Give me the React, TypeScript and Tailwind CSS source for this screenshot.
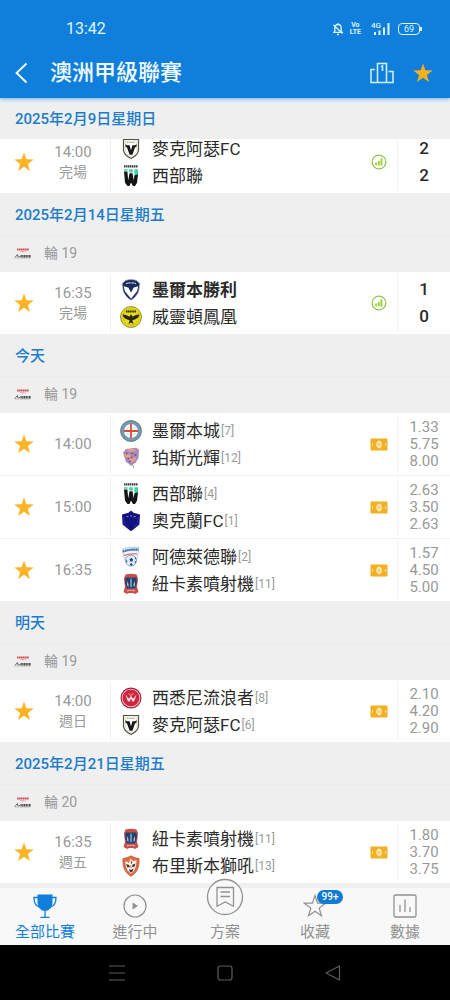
import type { ReactNode } from "react";

type TeamId =
  | "macarthur"
  | "western"
  | "victory"
  | "phoenix"
  | "city"
  | "perth"
  | "auckland"
  | "adelaide"
  | "newcastle"
  | "wanderers"
  | "brisbane";

interface Team {
  id: TeamId;
  name: string;
  rank?: number;
  bold?: boolean;
}

interface Match {
  time: string;
  note?: string;
  teams: [Team, Team];
  score?: [number, number];
  odds?: [string, string, string];
}

interface Section {
  date: string;
  round?: string;
  matches: Match[];
}

const sections: Section[] = [
  {
    date: "2025年2月9日星期日",
    matches: [
      {
        time: "14:00",
        note: "完場",
        teams: [
          { id: "macarthur", name: "麥克阿瑟FC" },
          { id: "western", name: "西部聯" },
        ],
        score: [2, 2],
      },
    ],
  },
  {
    date: "2025年2月14日星期五",
    round: "輪 19",
    matches: [
      {
        time: "16:35",
        note: "完場",
        teams: [
          { id: "victory", name: "墨爾本勝利", bold: true },
          { id: "phoenix", name: "威靈頓鳳凰" },
        ],
        score: [1, 0],
      },
    ],
  },
  {
    date: "今天",
    round: "輪 19",
    matches: [
      {
        time: "14:00",
        teams: [
          { id: "city", name: "墨爾本城", rank: 7 },
          { id: "perth", name: "珀斯光輝", rank: 12 },
        ],
        odds: ["1.33", "5.75", "8.00"],
      },
      {
        time: "15:00",
        teams: [
          { id: "western", name: "西部聯", rank: 4 },
          { id: "auckland", name: "奧克蘭FC", rank: 1 },
        ],
        odds: ["2.63", "3.50", "2.63"],
      },
      {
        time: "16:35",
        teams: [
          { id: "adelaide", name: "阿德萊德聯", rank: 2 },
          { id: "newcastle", name: "紐卡素噴射機", rank: 11 },
        ],
        odds: ["1.57", "4.50", "5.00"],
      },
    ],
  },
  {
    date: "明天",
    round: "輪 19",
    matches: [
      {
        time: "14:00",
        note: "週日",
        teams: [
          { id: "wanderers", name: "西悉尼流浪者", rank: 8 },
          { id: "macarthur", name: "麥克阿瑟FC", rank: 6 },
        ],
        odds: ["2.10", "4.20", "2.90"],
      },
    ],
  },
  {
    date: "2025年2月21日星期五",
    round: "輪 20",
    matches: [
      {
        time: "16:35",
        note: "週五",
        teams: [
          { id: "newcastle", name: "紐卡素噴射機", rank: 11 },
          { id: "brisbane", name: "布里斯本獅吼", rank: 13 },
        ],
        odds: ["1.80", "3.70", "3.75"],
      },
    ],
  },
];

const crests: Record<TeamId, ReactNode> = {
  macarthur: (
    <>
      <path d="M3.500 1.500h15v10.500c0 4-3.500 6.500-7.500 8.500C7 18.500 3.500 16 3.500 12z" fill="#fff" stroke="#55533f" strokeWidth="1.200" />
      <path d="M5.200 3.200h11.600v8.600c0 3-2.600 5-5.800 6.700-3.200-1.700-5.800-3.700-5.800-6.700z" fill="none" stroke="#cfc7a8" strokeWidth=".6" />
      <path d="M7 4.500h8" stroke="#8b8874" strokeWidth=".8" strokeDasharray="1 .5" />
      <path d="M5.200 6.200l1.800 1h2.600L11 12.500l1.400-5.300H15l1.800-1-.4 2.600-1.400.7-2.600 7.300H9.600L7 9.500l-1.400-.7z" fill="#16181a" />
    </>
  ),
  western: (
    <>
      <path d="M4 1.300h14" stroke="#3a3a3a" strokeWidth="2.200" strokeDasharray="1.500 .5" />
      <path d="M4 4.200h3.600v1.500H4zM9.200 4.200h3.600v3.300H9.200zM14.400 4.200H18v7.500h-3.600z" fill="#3fd0a6" />
      <path d="M4 6.500h3.400l.8 9 1.300-7.300h3l1.300 7.300.6-5 3.600-1.200-1 8.500-2 3.200h-2L11 17.500 9.500 21h-2L5 17.800z" fill="#121516" />
    </>
  ),
  victory: (
    <>
      <path d="M5.500 1.500C9 .2 13 .2 16.500 1.500l3.300 3-1 7.500c-1.500 4-4.300 7-7.800 9.200C7.500 19 4.700 16 3.200 12l-1-7.500z" fill="#1b2b5e" stroke="#a5acc4" strokeWidth=".7" />
      <path d="M3.800 7.300l5 1.500L11 13.500l2.200-4.700 5-1.500-1 4.800L11 19.700 4.800 12.100z" fill="#fff" />
      <path d="M8.500 8.700h5L11 13z" fill="#1b2b5e" />
      <path d="M6 4.700c3-1.200 7-1.200 10 0" fill="none" stroke="#cfd6ec" strokeWidth="1.300" strokeDasharray="1.100 .4" />
    </>
  ),
  phoenix: (
    <>
      <circle cx="11" cy="11" r="10.500" fill="#e9dc1c" stroke="#6e6a1a" strokeWidth=".7" />
      <circle cx="11" cy="11" r="8.200" fill="none" stroke="#a69d18" strokeWidth=".5" />
      <path d="M6 5.500h10" stroke="#2d2b18" strokeWidth="1.800" strokeDasharray="1.400 .4" />
      <path d="M2.500 8.500c3 .2 5.500 1 7 2.300L11 8l1.500 2.800c1.500-1.300 4-2.100 7-2.300-.8 2.800-2.700 4.700-5.500 5.300l-1.700.5L13.500 18 11 16.500 8.500 18l1.200-3.700-1.700-.5c-2.800-.6-4.700-2.500-5.500-5.300z" fill="#292614" />
    </>
  ),
  city: (
    <>
      <circle cx="11" cy="11" r="10.500" fill="#6e93a9" stroke="#4c6b80" strokeWidth=".7" />
      <circle cx="11" cy="11" r="8.600" fill="none" stroke="#8fb0c2" strokeWidth=".8" strokeDasharray="1.200 1" />
      <circle cx="11" cy="11" r="7" fill="#fff" />
      <path d="M11 4v14M4 11h14" stroke="#dd4b38" strokeWidth="1.800" />
      <path d="M6.500 7H9v2H6.500zM13 7h2.500v2H13zM6.500 13H9v2H6.500zM13 13h2.500v2H13z" fill="#dcebf2" />
    </>
  ),
  perth: (
    <>
      <path d="M3 5.500L6 2l10-1.200 3 1.700-.5 8.500-3 5-4.500 2-5-3z" fill="#a98abb" />
      <path d="M6 3.500l5-1.700 6 1.200-5 2zM4 7.500l4-1 3 3-4 2zM9 12l4-2 3.500 1.500-4.500 4z" fill="#e8a07f" />
      <path d="M6 6.500h1.500M11.500 6.500h1.800M7.500 11.500H9M14.500 8h1.800M11 10.500h1.500M9 14.500h1.500" stroke="#634b94" strokeWidth="1.600" />
      <path d="M12 17l2 4M9.500 17l2 2" stroke="#8c7190" strokeWidth=".8" />
    </>
  ),
  auckland: (
    <>
      <path d="M11 .5l2.500 2.300 6.500 1.700-.6 10-4.500 3.700L11 21.300l-3.900-3.100-4.500-3.700L2 4.500l6.500-1.700z" fill="#11117f" />
      <path d="M3.500 7l1.500 7 4 3M18.500 7L17 14l-4 3" fill="none" stroke="#2830a8" strokeWidth=".8" />
      <path d="M6.500 6.500h2M10 6h2M13.500 6.500h2" stroke="#9ba0cd" strokeWidth=".8" />
      <path d="M9 15l2 1 2-1-2 3z" fill="#080d50" />
    </>
  ),
  adelaide: (
    <>
      <path d="M2 3.500c5-2.500 11-2.800 17-2l-1.500 9c-.5 4.500-3 8-6.500 10C7 18.500 4.200 15 3.800 10z" fill="#eef3f8" stroke="#9cabc0" strokeWidth=".6" />
      <path d="M3 5.500c5-1.800 10-2.200 15.500-1.800" fill="none" stroke="#2c70b2" strokeWidth="2.200" strokeDasharray="1.700 .4" />
      <path d="M4 9.500c4-1.600 8-2 13-1.500" fill="none" stroke="#d95d5e" strokeWidth="1.100" />
      <circle cx="11" cy="14.500" r="5.500" fill="#e5edf6" stroke="#6385aa" strokeWidth=".7" />
      <path d="M9.500 13l2-1 1.600 1.500-.7 2h-2.200zM6 14l1.500 1-1 2zM14.500 11l1.500 1-.5 1.700zM9.500 18l1.800-.7 1.700 1-1.700 1.400zM14.500 15.500l1.700-.5-1 2.500z" fill="#17477f" />
    </>
  ),
  newcastle: (
    <>
      <path d="M5.500 1.500c3.500-1 7.500-1 11 0l1.500 4-1 8.500 1.500 5-3.500 2-2-1h-4l-2 1-3.500-2L5 14 4 5.500z" fill="#c84e4b" />
      <path d="M5.500 4.500h11l.5 5-2 6H7L5 9.500z" fill="#21446f" />
      <path d="M11 4.500l1 2.500v7h-2V7zM7 8l1.500 3v3L7 12.500zM15 8l-1.500 3v3l1.500-1.500z" fill="#a6bfd5" />
      <path d="M11 5v10" stroke="#294a73" strokeWidth=".8" />
      <path d="M7 18c2-1 6-1 8 0" fill="none" stroke="#f2c6bd" strokeWidth="1.200" strokeDasharray="1 .5" />
    </>
  ),
  wanderers: (
    <>
      <circle cx="11" cy="11" r="10.500" fill="#a01f38" />
      <circle cx="11" cy="11" r="9.300" fill="#f7dfe2" />
      <circle cx="11" cy="11" r="8.500" fill="#d3243e" />
      <path d="M5.500 7.500l2 6 1.800 1.500L11 11.500l1.700 3.500 1.800-1.500 2-6-3 4-1-.3L11 8.700l-1.500 2.500-1 .3z" fill="#fbeaec" />
      <path d="M8.500 6.500L11 8.500l2.500-2" stroke="#f7b9bf" strokeWidth=".9" fill="none" />
    </>
  ),
  brisbane: (
    <>
      <path d="M3 3.500C7 3 9 2 11 .8c2 1.200 4 2.200 8 2.700.5 8-1.500 14-8 17.700C4.500 17.500 2.500 11.500 3 3.500z" fill="#df6c43" stroke="#b45b3f" strokeWidth=".8" />
      <path d="M5.500 6l3.500 2 1.500-4.500L13 6l3.500-.5-.5 5.500-2 5-3 2.500-3.500-3L5.500 10z" fill="#f7eee5" />
      <path d="M6 9l3 1 1 2-2.500.5zM12 10l3.500-1.500-1 3-2 .8zM9 14l2 1 2.500-1.500-1 3-1.500 1-1.500-1.200zM11 5l1.200 3L11 9z" fill="#35333a" />
      <path d="M10.300 9.500l1.700 3.500-2-.5z" fill="#f0834d" />
    </>
  ),
};

function Crest({ id }: { id: TeamId }) {
  return (
    <svg viewBox="0 0 22 22" className="size-[22px] shrink-0" aria-hidden="true">
      {crests[id]}
    </svg>
  );
}

const STAR = "M12 1.500l2.600 7.600 8 .1-6.400 4.900 2.300 7.700L12 17.200l-6.500 4.600 2.300-7.700-6.400-4.900 8-.1z";

function Star({ className }: { className: string }) {
  return (
    <svg viewBox="0 0 24 24" className={className} aria-hidden="true">
      <path d={STAR} fill="currentColor" />
    </svg>
  );
}

function LeagueMark() {
  return (
    <svg viewBox="0 0 18 12" className="h-3 w-[18px]" aria-hidden="true">
      <path d="M3 2.500h12" stroke="#d5525b" strokeWidth="2" strokeDasharray="1.700 .3" />
      <path d="M6.500 4.700h5" stroke="#d98b90" strokeWidth="1" strokeDasharray="1 .4" />
      <path d="M1 10.500l2.500-3 .8 3M5 9.500h1" fill="none" stroke="#555" strokeWidth=".9" />
      <path d="M6.500 9.200h10.500" stroke="#505050" strokeWidth="2.400" strokeDasharray="1.300 .4" />
      <path d="M.5 11h16" stroke="#888" strokeWidth=".5" />
    </svg>
  );
}

function StatsIcon() {
  return (
    <svg viewBox="0 0 16 16" className="size-4" aria-hidden="true">
      <circle cx="8" cy="8" r="6.900" fill="none" stroke="#92c34c" strokeWidth="1.200" />
      <path d="M4.200 8.500h1.700v3H4.200zM6.800 7h1.900v4.500H6.800zM9.500 4.500h1.900v7H9.500z" fill="#98d12f" />
    </svg>
  );
}

function OddsIcon() {
  return (
    <svg viewBox="0 0 18 13" className="h-[13px] w-[18px]" aria-hidden="true">
      <rect x=".5" y=".5" width="17" height="12" rx="1" fill="#f2b022" />
      <ellipse cx="9" cy="6.500" rx="2.200" ry="2.800" fill="none" stroke="#fff4d2" strokeWidth="1.200" />
      <path d="M9 2.500v8M2.500 5.500v2M15.500 5.500v2" stroke="#fff4d2" strokeWidth="1.100" />
    </svg>
  );
}

function StatusBar() {
  return (
    <div className="flex h-12 items-center justify-between pt-2.5 pr-7 pl-[66px] text-[#def5ff]">
      <span className="text-[16px] leading-5">13:42</span>
      <div className="flex items-center">
        <svg viewBox="0 0 12 14" className="mr-1.5 h-3.5 w-3" fill="none" stroke="currentColor" strokeWidth="1.300" aria-hidden="true">
          <path d="M2.800 10V6.200C2.800 4 4 2.500 6 2.500s3.200 1.500 3.200 3.700V10M1 10.300h10M6 1v1.500M5 12.500h2M1.500 3l9 8.500" />
        </svg>
        <span className="mr-2.5 text-center text-[7px] leading-[7px] font-bold">
          Vo
          <br />
          LTE
        </span>
        <span className="-mr-[7px] self-start text-[8px] leading-[8px] font-medium">4G</span>
        <svg viewBox="0 0 16 14" className="mr-2 h-3.5 w-4" fill="currentColor" aria-hidden="true">
          <path d="M0 10h2v3H0zM4.500 8.500h2V13h-2zM9 5.500h2V13H9zM13.500 1h2v12h-2z" />
        </svg>
        <span className="flex h-3 w-[22px] items-center justify-center rounded-[4px] border border-current text-[9px] leading-[9px]">69</span>
        <span className="h-1 w-0.5 bg-current" />
      </div>
    </div>
  );
}

function Header() {
  return (
    <header className="sticky top-0 z-20 bg-[#107fdc] shadow-[0_1px_4px_#5eb0f0]">
      <StatusBar />
      <div className="flex h-[50px] items-center pr-4 pl-3">
        <button aria-label="返回" className="flex size-5 items-center justify-center text-white">
          <svg viewBox="0 0 20 24" className="h-6 w-5" fill="none" stroke="currentColor" strokeWidth="1.800" aria-hidden="true">
            <path d="M14.500 2.500L4.500 12l10 9.500" />
          </svg>
        </button>
        <h1 className="ml-[18px] flex-1 text-[22px] leading-8 font-medium text-[#f0fbff]">澳洲甲級聯賽</h1>
        <button aria-label="排名" className="mr-[18px] text-[#d6f1ff]">
          <svg viewBox="0 0 24 22" className="h-[22px] w-6" fill="none" stroke="currentColor" strokeWidth="1.500" aria-hidden="true">
            <path d="M7.500 20.500v-19h9v19M4.800 7.500H1v13h22v-11h-4.500M11 5l1.500-1v5" />
          </svg>
        </button>
        <button aria-label="收藏聯賽" className="text-[#fcb01c]">
          <Star className="size-[22px]" />
        </button>
      </div>
    </header>
  );
}

function TeamLine({ team }: { team: Team }) {
  return (
    <div className="flex h-[27px] items-center">
      <Crest id={team.id} />
      <span className={team.bold ? "ml-2.5 text-[17px] leading-6 font-bold text-[#2b2b2b]" : "ml-2.5 text-[17px] leading-6 text-[#2b2b2b]"}>
        {team.name}
      </span>
      {team.rank !== undefined && <span className="ml-px text-[12px] leading-4 text-[#9a9a9a]">[{team.rank}]</span>}
    </div>
  );
}

function MatchRow({ match }: { match: Match }) {
  return (
    <li className="flex h-[63px] items-stretch border-b border-[#f0f0f0] bg-white">
      <div className="flex w-[110px] items-center">
        <button aria-label="收藏比賽" className="flex w-12 justify-center text-[#fcb324]">
          <Star className="size-[22px]" />
        </button>
        <div className="w-[50px] text-center text-[#999]">
          <div className="text-[15px] leading-5">{match.time}</div>
          {match.note && <div className="text-[14px] leading-5">{match.note}</div>}
        </div>
      </div>
      <div className="my-0.5 w-px bg-[#efefef]" />
      <div className="flex min-w-0 flex-1 flex-col justify-center pl-[9px]">
        <TeamLine team={match.teams[0]} />
        <TeamLine team={match.teams[1]} />
      </div>
      <div className="flex w-9 items-center justify-center">{match.score ? <StatsIcon /> : <OddsIcon />}</div>
      <div className="my-0.5 w-px bg-[#f3f3f3]" />
      <div className="flex w-[52px] flex-col items-center justify-center">
        {match.score?.map((goals, i) => (
          <span key={i} className="text-[17px] leading-[27px] font-medium text-[#2a2a2a]">
            {goals}
          </span>
        ))}
        {match.odds?.map((odd, i) => (
          <span key={i} className="text-[15px] leading-[17px] text-[#999]">
            {odd}
          </span>
        ))}
      </div>
    </li>
  );
}

function MatchSection({ section }: { section: Section }) {
  return (
    <section>
      <h2 className="relative z-10 flex h-[41px] items-center bg-[#efefef] px-[15px] text-[15px] leading-6 font-medium text-[#1c7cc9]">
        {section.date}
      </h2>
      {section.round && (
        <div className="flex h-[37px] items-center gap-3 border-t border-[#ebebeb] bg-[#efefef] px-3.5 pb-0.5 text-[14px] leading-6 text-[#9a9a9a]">
          <LeagueMark />
          <span>{section.round}</span>
        </div>
      )}
      <ul className={section.round ? "" : "-mt-2"}>
        {section.matches.map((match) => (
          <MatchRow key={match.time} match={match} />
        ))}
      </ul>
    </section>
  );
}

const tabs: { label: string; icon: ReactNode; active?: boolean; raised?: boolean; badge?: string }[] = [
  {
    label: "全部比賽",
    active: true,
    icon: (
      <svg viewBox="0 0 24 24" className="size-6" aria-hidden="true">
        <path d="M4.500 .5h15v8c0 4-2.500 7-5.500 8.300h-4C7 15.500 4.500 12.500 4.500 8.500z" fill="currentColor" />
        <path d="M5 3.500H1c0 4.500.5 8 5 9.500M19 3.500h4c0 4.500-.5 8-5 9.500M12 16v7M7.500 23.300h9" fill="none" stroke="currentColor" strokeWidth="1.300" />
      </svg>
    ),
  },
  {
    label: "進行中",
    icon: (
      <svg viewBox="0 0 24 24" className="size-6" aria-hidden="true">
        <circle cx="12" cy="12" r="11" fill="none" stroke="currentColor" strokeWidth="1.200" />
        <path d="M9.500 8.500l5.500 3.500-5.500 3.500z" fill="currentColor" />
      </svg>
    ),
  },
  {
    label: "方案",
    raised: true,
    icon: (
      <svg viewBox="0 0 38 38" className="size-[38px]" fill="none" stroke="currentColor" strokeWidth="1.300" aria-hidden="true">
        <circle cx="19" cy="19" r="17.500" fill="#f8f8f8" />
        <path d="M11 9.500h16.500v18.800L19.300 24 11 28.300zM14.500 14h9.500M14.500 18.500h9.500" />
      </svg>
    ),
  },
  {
    label: "收藏",
    badge: "99+",
    icon: (
      <svg viewBox="0 0 24 24" className="size-6" aria-hidden="true">
        <path d={STAR} fill="none" stroke="currentColor" strokeWidth="1.200" />
      </svg>
    ),
  },
  {
    label: "數據",
    icon: (
      <svg viewBox="0 0 24 24" className="size-6" fill="none" stroke="currentColor" strokeWidth="1.300" aria-hidden="true">
        <rect x="1" y="1" width="22" height="22" rx="1.500" />
        <path d="M7 11v7M12 5.500V18M17 13v5" />
      </svg>
    ),
  },
];

function TabBar() {
  return (
    <nav className="grid h-[61px] grid-cols-5 border-t-4 border-[#f0f0f0] bg-[#f8f8f8]">
      {tabs.map((tab) => (
        <button
          key={tab.label}
          className={tab.active ? "flex h-[57px] flex-col items-center justify-end pb-[3px] text-[#107fdc]" : "flex h-[57px] flex-col items-center justify-end pb-[3px] text-[#919191]"}
        >
          <span className={tab.raised ? "relative mb-1.5 block" : "relative mb-1 block"}>
            {tab.icon}
            {tab.badge && (
              <span className="absolute -top-1 left-3.5 flex h-3.5 w-[26px] items-center justify-center rounded-full bg-[#107bd2] text-[10px] leading-[14px] font-medium text-white">
                {tab.badge}
              </span>
            )}
          </span>
          <span className="text-[15px] leading-5">{tab.label}</span>
        </button>
      ))}
    </nav>
  );
}

function SystemBar() {
  return (
    <div className="flex h-[55px] items-center justify-between bg-black px-[109px] text-[#5d5d5d]">
      <button aria-label="最近使用">
        <svg viewBox="0 0 16 16" className="size-4" fill="none" stroke="currentColor" strokeWidth="1.200" aria-hidden="true">
          <path d="M0 1h16M0 8h16M0 15h16" />
        </svg>
      </button>
      <button aria-label="主畫面">
        <svg viewBox="0 0 16 16" className="size-4" fill="none" stroke="currentColor" strokeWidth="1.200" aria-hidden="true">
          <rect x="1" y="1" width="14" height="14" rx="2.500" />
        </svg>
      </button>
      <button aria-label="返回上一頁">
        <svg viewBox="0 0 16 16" className="size-4" fill="none" stroke="currentColor" strokeWidth="1.200" strokeLinejoin="round" aria-hidden="true">
          <path d="M1 8l13.500-7v14z" />
        </svg>
      </button>
    </div>
  );
}

export default function App() {
  return (
    <div className="flex min-h-screen flex-col bg-[#efefef] font-['Roboto','Noto_Sans_CJK_TC',sans-serif]">
      <Header />
      <main className="flex-1">
        {sections.map((section) => (
          <MatchSection key={section.date} section={section} />
        ))}
      </main>
      <div className="sticky bottom-0 z-10">
        <TabBar />
        <SystemBar />
      </div>
    </div>
  );
}
